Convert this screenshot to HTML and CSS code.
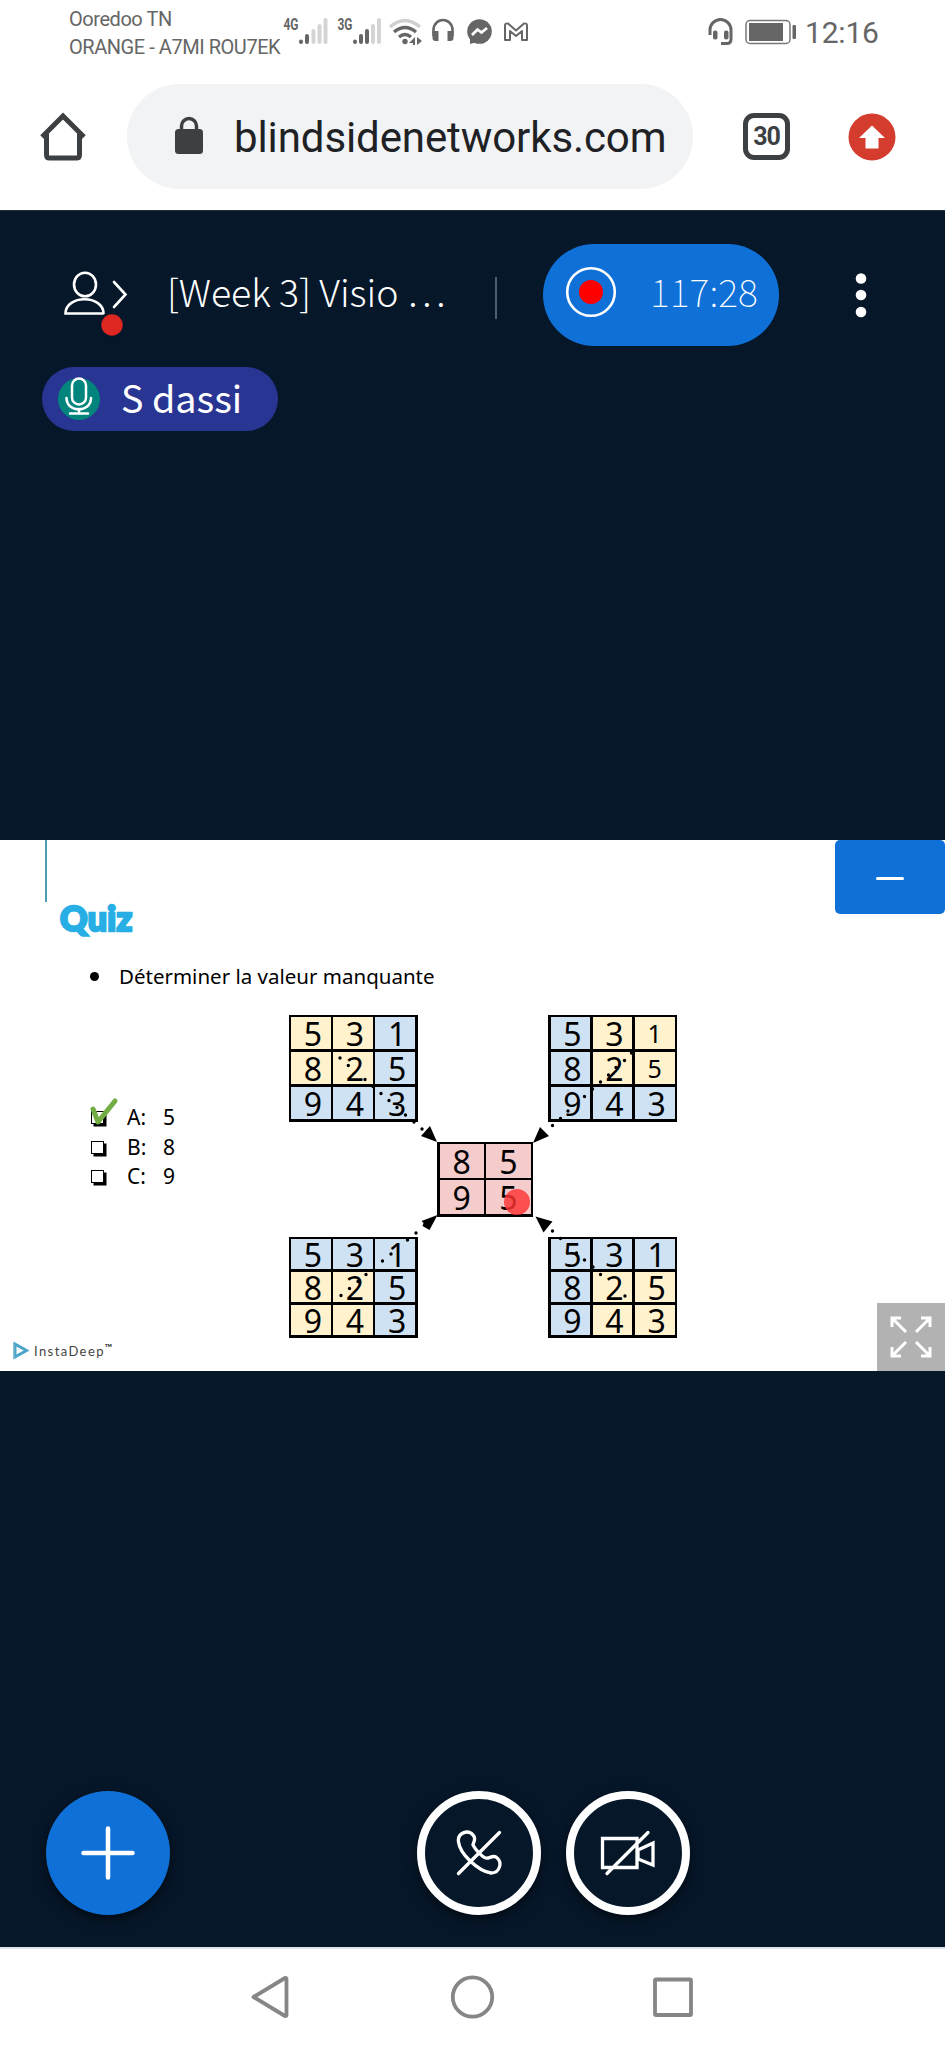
FILE: index.html
```html
<!DOCTYPE html>
<html lang="fr">
<head>
<meta charset="utf-8">
<title>[Week 3] Visio</title>
<link rel="stylesheet" href="styles.css">
</head>
<body>
<div class="phone">
  <header class="status">
    <div class="carriers"><div class="c1">Ooredoo TN</div><div class="c2">ORANGE - A7MI ROU7EK</div></div>
    <svg class="status-icons" width="250" height="40" viewBox="282 12 250 40">
      <g class="net-label"><text x="283.500" y="30" textLength="15" lengthAdjust="spacingAndGlyphs">4G</text><text x="337.500" y="30" textLength="15" lengthAdjust="spacingAndGlyphs">3G</text></g>
      <g stroke-width="4" stroke-linecap="round">
        <path stroke="#666" d="M301 42v-.5M307 42v-6M355 42v-.5M361 42v-6M367 42V31"/>
        <path stroke="#d4d4d4" d="M313.500 42V31M319.500 42V26M325.500 42V20M373 42V26M379 42V20"/>
      </g>
      <g fill="none" stroke="#666" stroke-width="3.400">
        <path stroke="#d0d0d0" d="M390 27q15-13 30 0"/>
        <path d="M394 32q11-9 22 0"/><path d="M399 37q6-5 12 0"/>
      </g>
      <circle cx="405" cy="41.500" r="2.700" fill="#666"/><path fill="#666" d="M415 37v8h-2v-2h-4zM417 37v8l5-4z"/>
      <path d="M433.500 36v-6a9.500 10 0 0 1 19 0v6" fill="none" stroke="#666" stroke-width="2.600"/>
      <path d="M432.500 31h6v10h-3q-3 0-3-3zM453.500 31h-6v10h3q3 0 3-3z" fill="#666"/>
      <circle cx="479.500" cy="31.500" r="12.300" fill="#666"/><path d="M470 38v6l7-2z" fill="#666"/>
      <path d="M472 35l5.500-5.500 4 3 5.500-4.500" fill="none" stroke="#fff" stroke-width="2.800"/>
      <path d="M505 40V25.500q0-2.500 3-2l8 7 8-7q3-.5 3 2V40h-5V31l-6 5-6-5v9z" fill="#fff" stroke="#666" stroke-width="2" stroke-linejoin="round"/>
    </svg>
    <svg class="battery" width="92" height="32" viewBox="706 16 92 32">
      <path d="M710 35v-5a10.500 10.500 0 0 1 21 0v9q0 4.500-4 4.500h-6" fill="none" stroke="#666" stroke-width="3"/>
      <rect x="713" y="30.500" width="4.500" height="9" rx="2" fill="#666"/><rect x="724" y="30.500" width="4.500" height="9" rx="2" fill="#666"/>
      <rect x="746" y="20.500" width="44" height="23" rx="4" fill="none" stroke="#777" stroke-width="1.500"/>
      <rect x="749" y="23" width="34" height="18" fill="#666"/><rect x="792.500" y="25" width="3.500" height="14" rx="1" fill="#666"/>
    </svg>
    <div class="clock">12:16</div>
  </header>
  <div class="toolbar">
    <svg class="home" width="48" height="50" viewBox="39 112 48 50"><path d="M42 137l21-21 21 21M46.500 134v21q0 3 3 3h27q3 0 3-3v-21" fill="none" stroke="#3c4043" stroke-width="5"/></svg>
    <div class="omnibox">
      <svg class="lock" width="30" height="40" viewBox="174 116 30 40"><rect x="175" y="129" width="28" height="25" rx="3.500" fill="#3c4043"/><path d="M181.500 131v-5a7.500 7.500 0 0 1 15 0v5" fill="none" stroke="#3c4043" stroke-width="3.500"/></svg>
      <span class="url">blindsidenetworks.com</span>
    </div>
    <div class="tabs">30</div>
    <svg class="update" width="48" height="48" viewBox="0 0 48 48"><circle cx="24" cy="24" r="23.500" fill="#d43c2e"/><path d="M24 12.500L37 25h-6.500v10.500h-13V25H11z" fill="#fff"/></svg>
  </div>
  <main class="meeting">
    <div class="navbar">
      <div class="users">
        <svg width="66" height="68" viewBox="63 270 66 68" fill="none" stroke="#fff" stroke-width="2.600">
          <ellipse cx="85" cy="284.500" rx="11" ry="11.800"/><path d="M65.500 313.500c0-19 38-19 38 0z"/>
          <path d="M114 282l11.500 12.500L114 307" stroke-linecap="round"/>
          <circle cx="112" cy="325" r="12" fill="#df2721" stroke="#06172a"/>
        </svg>
      </div>
      <div class="title">[Week 3] Visio …</div>
      <div class="divider"></div>
      <div class="recording">
        <svg width="52" height="52" viewBox="0 0 52 52"><circle cx="26" cy="26" r="23.800" fill="none" stroke="#fff" stroke-width="2.600"/><circle cx="26" cy="26" r="12" fill="#f00"/></svg>
        <span class="timer">117:28</span>
      </div>
      <svg class="more" width="12" height="46" viewBox="0 0 12 46" fill="#fff"><circle cx="6" cy="6.500" r="5.300"/><circle cx="6" cy="23" r="5.300"/><circle cx="6" cy="40" r="5.300"/></svg>
    </div>
    <div class="talker">
      <svg width="44" height="46" viewBox="57 376 44 46"><circle cx="79" cy="399" r="21" fill="#00847b"/><g fill="none" stroke="#fff" stroke-width="2.500" stroke-linecap="round"><rect x="72" y="378.500" width="14" height="26" rx="7"/><path d="M66.500 398c0 15 24.500 15 24.500 0M79 409v4M70 413.500h18"/></g></svg>
      <span class="speaker">S dassi</span>
    </div>
    <section class="slide">
      <i class="rule"></i>
      <h1>Quiz</h1>
      <div class="question"><i></i><span>Déterminer la valeur manquante</span></div>
      <div class="options">
        <div><i></i><b>A:</b><span>5</span></div>
        <div><i></i><b>B:</b><span>8</span></div>
        <div><i></i><b>C:</b><span>9</span></div>
      </div>
      <div class="matrix tl"><b>5</b><b>3</b><em>1</em><b>8</b><b>2</b><em>5</em><em>9</em><em>4</em><em>3</em></div>
      <div class="matrix tr"><em>5</em><b>3</b><b class="small">1</b><em>8</em><b>2</b><b class="small">5</b><em>9</em><em>4</em><em>3</em></div>
      <div class="matrix bl"><em>5</em><em>3</em><em>1</em><b>8</b><b>2</b><em>5</em><b>9</b><b>4</b><em>3</em></div>
      <div class="matrix br"><em>5</em><em>3</em><em>1</em><em>8</em><b>2</b><b>5</b><em>9</em><b>4</b><b>3</b></div>
      <div class="matrix mid"><u>8</u><u>5</u><u>9</u><u>5</u></div>
      <svg class="overlay" width="945" height="531" viewBox="0 840 945 531">
        <g stroke="#000" stroke-width="3.400" stroke-linecap="round">
          <path d="M340 1058h0M348.300 1065.500h0M365 1079.500h0M373 1086.500h0M381 1093.500h0M389 1100.500h0M397 1107.500h0M405.500 1115h0M414 1122h0M422 1129h0"/>
          <path d="M631.500 1053h0M624.500 1060.500h0M616 1067.500h0M608.500 1075h0M600.500 1082h0M592.500 1089h0M584.500 1096.500h0M568 1111h0M560.500 1118.500h0M552.500 1125.500h0"/>
          <path d="M341 1295.500h0M349.500 1288.500h0M358 1281.500h0M366 1274.500h0M382.500 1261h0M391 1254h0M407.500 1240h0M416 1233h0"/>
          <path d="M552.500 1231h0M560.500 1238.500h0M576.500 1253h0M584.500 1260h0M593 1267h0M600.500 1274.500h0M625 1296h0"/>
        </g>
        <path d="M437 1142l-16-6 9-10zM533 1143l16-7-9-9zM437.500 1215l-16 6 2 2-1 3 7 4zM535.500 1216.500l17 5-9 11z"/>
        <circle cx="517" cy="1202" r="13" fill="#f33" fill-opacity=".82"/>
        <path d="M93 1109l5 13 17-21" fill="none" stroke="#73ae45" stroke-width="5" stroke-linecap="round" stroke-linejoin="round"/>
      </svg>
      <div class="brand">
        <svg width="17" height="20" viewBox="0 0 17 20"><path d="M2 3v13l11.500-6.500z" fill="none" stroke="#4ba5c9" stroke-width="3"/><path d="M1 18V2" stroke="#79b7d2"/></svg>
        <span>InstaDeep<sup>™</sup></span>
      </div>
      <div class="minimize"><i></i></div>
      <div class="fullscreen"><svg width="42" height="42" viewBox="0 0 42 42" fill="none" stroke="#fff" stroke-width="3"><path d="M16 16L2 2M2 11V2h9M26 16L40 2M31 2h9v9M16 26L2 40M2 31v9h9M26 26l14 14M31 40h9v-9"/></svg></div>
    </section>
    <div class="actions">
      <div class="round plus"><svg width="56" height="56" viewBox="0 0 56 56" stroke="#fff" stroke-width="4.500" stroke-linecap="round"><path d="M28 3.500v49M3.500 28h49"/></svg></div>
      <div class="round call"><svg width="46" height="46" viewBox="0 0 46 46" fill="none" stroke="#fff" stroke-width="3.300" stroke-linecap="round" stroke-linejoin="round"><path d="M2.500 12C1 3 12-1 17 5c4 4 0 7 0 10 2 4 9 12 13 13 3 1 6-3 10-1 7 5 4 16-5 16C22 41 4 24 2.500 12z"/><path d="M2.500 43.500l41-41"/></svg></div>
      <div class="round cam"><svg width="56" height="48" viewBox="0 0 56 48" fill="none" stroke="#fff" stroke-width="3.300" stroke-linecap="round"><path d="M2.500 9.500h34.500v29H2.500zM38 21l15-7v22l-15-6zM7 44.500l41-41"/></svg></div>
    </div>
  </main>
  <nav class="sysnav"><svg width="945" height="101" viewBox="0 1947 945 101" fill="none" stroke="#868686" stroke-width="3.800"><path d="M253.500 1997L285 1978q1.500-.5 1.500 1v36q0 1.500-1.500 1z" stroke-linejoin="round"/><circle cx="472.500" cy="1997" r="19.700"/><rect x="655" y="1979.500" width="36" height="35.500" rx="1"/></svg></nav>
</div>
</body>
</html>
```
FILE: styles.css
```css
* { box-sizing: border-box; }
body { margin: 0; }
svg { display: block; flex: none; }
.phone { width: 945px; height: 2048px; display: flex; flex-direction: column; background: #fff; overflow: hidden; font-family: Roboto, sans-serif; }
.status { height: 66px; display: flex; padding-left: 69px; color: #666; }
.carriers { width: 213px; padding-top: 5px; font-size: 20px; line-height: 28px; letter-spacing: -.45px; white-space: nowrap; }
.status-icons { margin-top: 12px; }
.net-label { font: 700 16px Roboto, sans-serif; fill: #666; }
.battery { margin: 16px 7px 0 174px; }
.clock { margin-top: 14px; font-size: 30px; line-height: 38px; font-weight: 400; letter-spacing: -.2px; }
.toolbar { height: 144px; display: flex; align-items: flex-start; padding: 18px 0 0 39px; }
.home { margin: 28px 40px 0 0; }
.omnibox { width: 566px; height: 105px; border-radius: 53px; background: #f1f3f4; display: flex; padding-left: 47px; }
.lock { margin: 32px 30px 0 0; }
.url { font-size: 42px; line-height: 52px; margin-top: 28px; color: #202124; white-space: nowrap; letter-spacing: -.1px; }
.tabs { width: 47px; height: 47px; margin: 29px 58px 0 50px; border: 5px solid #3c4043; border-radius: 11px; font-size: 25px; font-weight: 700; line-height: 37px; letter-spacing: -1px; text-align: center; color: #3c4043; }
.update { margin-top: 29px; }
.meeting { flex: none; height: 1736.500px; border-top: 1px solid #24303b; background: #06172a; color: #fff; font-family: "Noto Sans CJK SC", sans-serif; display: flex; flex-direction: column; }
.navbar { height: 156px; display: flex; padding-left: 63px; align-items: flex-start; }
.users { padding-top: 59px; }
.title { width: 326px; margin: 53px 0 0 38px; font-size: 37.500px; line-height: 54px; font-weight: 300; white-space: nowrap; }
.divider { width: 2px; height: 42px; margin-top: 66px; margin-left: 2px; background: #4f5d6d; }
.recording { width: 236px; height: 102px; margin: 33px 82px 0 46px; border-radius: 51px; background: #0f70d7; display: flex; padding: 22px 0 0 22px; }
.timer { font-size: 38px; line-height: 56px; font-weight: 100; margin: -3px 0 0 33px; }
.more { margin-top: 61px; margin-left: -6px; }
.talker { width: 236px; height: 64px; margin-left: 42px; border-radius: 32px; background: #283593; display: flex; align-items: center; padding-left: 15px; gap: 20px; }
.speaker { font-size: 37.700px; line-height: 56px; padding-bottom: 4px; white-space: nowrap; }
.slide { position: relative; height: 531px; margin-top: 409px; background: #fff; color: #000; font-family: "Noto Sans", sans-serif; padding-left: 60px; flex: none; }
.rule { position: absolute; left: 45px; top: 0; width: 1.500px; height: 62px; background: #4a9fae; }
h1 { margin: 0; padding-top: 57px; font: 900 34px/42px Lato, sans-serif; letter-spacing: .3px; color: #27aee4; -webkit-text-stroke: 2.500px #27aee4; }
.question { display: flex; align-items: center; margin-top: 22px; padding-left: 30px; font-size: 20.500px; line-height: 30px; }
.question i { width: 9px; height: 9px; border-radius: 50%; background: #000; margin-right: 20px; }
.options { margin: 112px 0 0 31px; width: 100px; font-size: 21px; line-height: 29.500px; }
.options div { display: flex; align-items: center; height: 29.500px; }
.options i { width: 13px; height: 13px; border: 1px solid #000; box-shadow: 2.500px 2.500px #000; margin-right: 23px; }
.options b { width: 36px; font-weight: 400; }
.matrix { position: absolute; display: grid; grid-template-columns: repeat(3, 1fr); grid-auto-rows: 1fr; gap: 2.500px; padding: 2.500px; background: #000; width: 129px; height: 107px; font-size: 32px; }
.matrix > * { font-weight: 400; font-style: normal; text-decoration: none; display: flex; align-items: center; justify-content: center; line-height: 20px; padding: 2px 0 0 4px; min-height: 0; }
.matrix b { background: #fff2cc; }
.matrix em { background: #cfe2f3; }
.matrix u { background: #f4cccc; padding-left: 0; }
.matrix .small { font-size: 25px; padding: 0; }
.tl { left: 288.500px; top: 174.500px; }
.tr { left: 548px; top: 174.500px; }
.bl { left: 288.500px; top: 396.500px; height: 101px; }
.br { left: 548px; top: 396.500px; height: 101px; }
.mid { left: 437px; top: 301.500px; width: 96px; height: 75px; grid-template-columns: 1fr 1fr; }
.overlay { position: absolute; left: 0; top: 0; }
.brand { position: absolute; left: 13px; bottom: 10px; display: flex; align-items: center; gap: 4px; font: 13px/20px Lato, sans-serif; letter-spacing: 1.400px; color: #444; }
.brand sup { font-size: 10px; font-weight: 700; line-height: 0; }
.minimize { position: absolute; right: 0; top: 0; width: 110px; height: 74px; border-radius: 5px; background: #0f70d7; display: flex; align-items: center; justify-content: center; }
.minimize i { width: 28px; height: 3px; border-radius: 2px; background: #fff; margin-top: 2px; }
.fullscreen { position: absolute; right: 0; bottom: 0; width: 68px; height: 68px; background: #b2b2b2; display: flex; align-items: center; justify-content: center; }
.actions { display: flex; margin-top: 420px; padding-left: 46px; }
.round { width: 124px; height: 124px; border-radius: 50%; display: flex; align-items: center; justify-content: center; box-shadow: 0 4px 12px #0009; }
.plus { background: #0f70d7; margin-right: 247px; }
.call { border: 8px solid #fff; margin-right: 25px; }
.cam { border: 8px solid #fff; }
.sysnav { flex: 1; border-top: 2px solid #dfe3ea; }
.sysnav svg { margin-top: -1.500px; }
```
